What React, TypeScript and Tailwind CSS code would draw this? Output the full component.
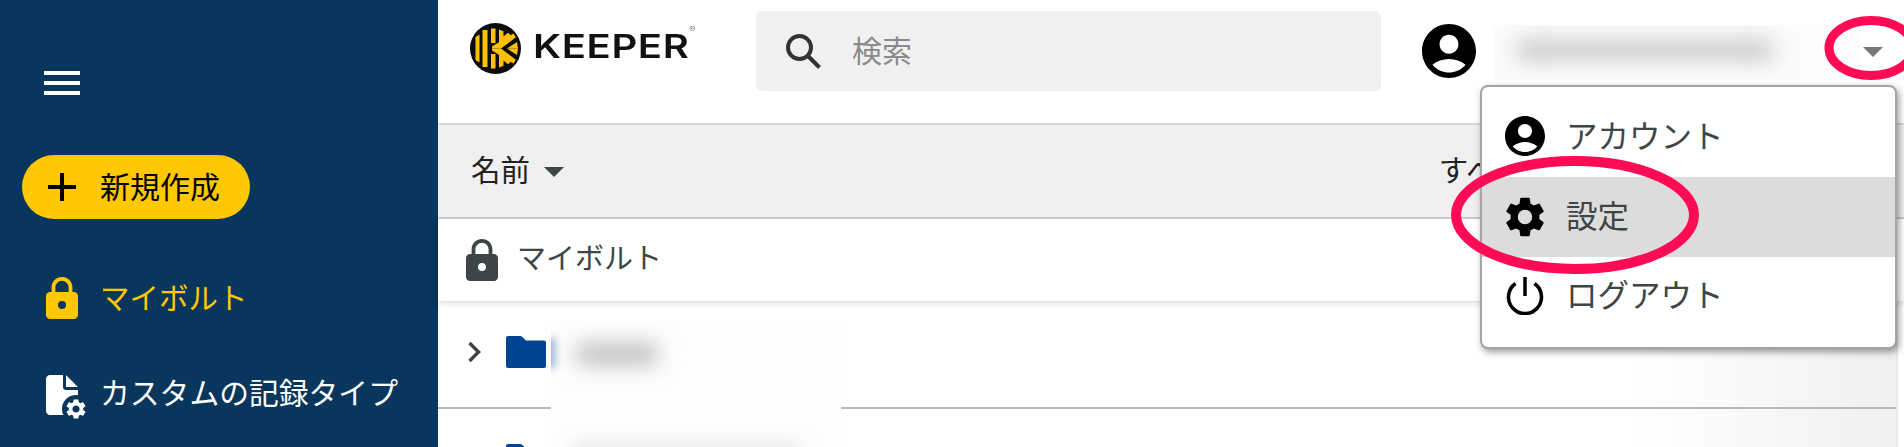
const ACCOUNT =
  "M12 2C6.48 2 2 6.48 2 12s4.48 10 10 10 10-4.48 10-10S17.52 2 12 2zm0 4c1.93 0 3.5 1.57 3.5 3.5S13.93 13 12 13s-3.5-1.57-3.5-3.5S10.07 6 12 6zm0 14c-2.03 0-4.43-.82-6.14-2.88C7.55 15.8 9.68 15 12 15s4.45.8 6.14 2.12C16.43 19.18 14.03 20 12 20z";
const GEAR =
  "M19.14 12.94c.04-.3.06-.61.06-.94 0-.32-.02-.64-.07-.94l2.03-1.58c.18-.14.23-.41.12-.61l-1.92-3.32c-.12-.22-.37-.29-.59-.22l-2.39.96c-.5-.38-1.03-.7-1.62-.94l-.36-2.54c-.04-.24-.24-.41-.48-.41h-3.84c-.24 0-.43.17-.47.41l-.36 2.54c-.59.24-1.13.57-1.62.94l-2.39-.96c-.22-.08-.47 0-.59.22L2.74 8.87c-.12.21-.08.47.12.61l2.03 1.58c-.05.3-.09.63-.09.94s.02.64.07.94l-2.03 1.58c-.18.14-.23.41-.12.61l1.92 3.32c.12.22.37.29.59.22l2.39-.96c.5.38 1.03.7 1.62.94l.36 2.54c.05.24.24.41.48.41h3.84c.24 0 .44-.17.47-.41l.36-2.54c.59-.24 1.13-.56 1.62-.94l2.39.96c.22.08.47 0 .59-.22l1.92-3.32c.12-.22.07-.47-.12-.61l-2.01-1.58zM12 15.6c-1.98 0-3.6-1.62-3.6-3.6s1.62-3.6 3.6-3.6 3.6 1.62 3.6 3.6-1.62 3.6-3.6 3.6z";
const FONT = "font-['Roboto','Noto_Sans_CJK_JP',sans-serif]";

function Lock({ className, hole }: { className: string; hole: string }) {
  return (
    <svg viewBox="0 0 32 42" className={className}>
      <path
        fill="currentColor"
        d="M16 0c5.800 0 10.400 4.600 10.400 10.400V15H28c2.200 0 4 1.800 4 4v19c0 2.200-1.800 4-4 4H4c-2.200 0-4-1.800-4-4V19c0-2.200 1.800-4 4-4h1.600v-4.600C5.600 4.600 10.200 0 16 0zm0 3.800c-3.600 0-6.600 3-6.600 6.600V15h13.200v-4.600c0-3.600-3-6.600-6.600-6.600z"
      />
      <circle cx="16" cy="28" r="4" fill={hole} />
    </svg>
  );
}

function CustomTypeIcon() {
  return (
    <svg viewBox="0 0 40 44" className="h-[44px] w-[40px] overflow-visible">
      <path
        fill="#fff"
        d="M4 0h13v12c0 1.700 1.300 3 3 3h12v21c0 2.200-1.800 4-4 4H4c-2.200 0-4-1.800-4-4V4c0-2.200 1.800-4 4-4zm16 0 12 12H20z"
      />
      <circle cx="30" cy="34" r="14" fill="#08365c" />
      <path fill="#fff" transform="translate(18 22)" d={GEAR} />
    </svg>
  );
}

function Sidebar() {
  return (
    <aside className="flex h-full w-[438px] shrink-0 flex-col bg-[#08365c]">
      <div className="mt-[71px] ml-[44px] flex w-[36px] flex-col gap-[6px]">
        <span className="h-[4px] bg-white" />
        <span className="h-[4px] bg-white" />
        <span className="h-[4px] bg-white" />
      </div>
      <button className="mt-[60px] ml-[22px] flex h-[64px] w-[228px] items-center gap-[24px] rounded-full bg-[#ffc800] pl-[26px] text-[30px] text-black">
        <svg viewBox="0 0 28 28" className="h-[28px] w-[28px]">
          <path d="M12 0h4v12h12v4H16v12h-4V16H0v-4h12z" />
        </svg>
        新規作成
      </button>
      <div className="mt-[58px] ml-[46px] flex h-[42px] items-center gap-[22px] text-[#ffc800]">
        <Lock className="h-[42px] w-[32px]" hole="#08365c" />
        <span className="mt-[2px] text-[29.500px]">マイボルト</span>
      </div>
      <div className="mt-[56px] ml-[46px] flex h-[44px] items-center gap-[14px] text-white">
        <CustomTypeIcon />
        <span className="mb-[6px] text-[29.800px]">カスタムの記録タイプ</span>
      </div>
    </aside>
  );
}

function KeeperLogo() {
  const half = (
    <>
      <path d="M21 5.500h4.500V20H21z" />
      <path d="M29 6.500l4.500 1.700v5.300l4.500-3.800 3 2.800-12 10z" />
      <path d="M22 23.500l21.500-13 2.300 3.700L31 25.500H22z" />
      <path d="M37 25.500l10-6.500 1 6.500z" />
    </>
  );
  return (
    <div className="flex items-center gap-[12px]">
      <svg viewBox="0 0 51 51" className="h-[51px] w-[51px] shrink-0">
        <circle cx="25.500" cy="25.500" r="25.500" fill="#0b0b0b" />
        <g fill="#ffc107">
          <path d="M5.500 14l4-2.500v28l-4-2.500zM12.500 7h5v37h-5z" />
          {half}
          <g transform="matrix(1 0 0 -1 0 51)">{half}</g>
        </g>
      </svg>
      <span className="relative mb-[3px] origin-left scale-x-[1.25] font-['Inter',sans-serif] text-[32px] leading-none font-semibold tracking-[0.5px] text-[#111]">
        KEEPER
        <span className="absolute top-[-6px] right-[-5px] text-[8px] font-normal tracking-normal text-[#777]">®</span>
      </span>
    </div>
  );
}

function Header() {
  return (
    <header className="flex h-[125px] shrink-0 border-b-2 border-[#d8d8d8]">
      <div className="mt-[23px] ml-[32px] w-[286px]">
        <KeeperLogo />
      </div>
      <div className="mt-[11px] flex h-[80px] w-[625px] items-center rounded-[6px] bg-[#f0f0f0] pl-[30px] text-[30px] text-[#8a8a8a]">
        <svg viewBox="0 0 35 35" className="h-[35px] w-[35px]" fill="none" stroke="#333" strokeWidth="4">
          <circle cx="13.500" cy="13.500" r="11.500" />
          <path d="M22 22l11.500 11.500" />
        </svg>
        <span className="ml-[31px]">検索</span>
      </div>
      <svg viewBox="2 2 20 20" className="mt-[24px] ml-[41px] h-[54px] w-[54px]">
        <path d={ACCOUNT} />
      </svg>
      <div className="relative mt-[25px] ml-[17px] h-[55px] w-[367px] overflow-hidden bg-[#fbfbfb]">
        <div className="absolute top-[13px] left-[22px] h-[24px] w-[260px] rounded-full bg-[#d0d0d0] blur-[10px]" />
      </div>
      <div className="mt-[47px] ml-[3px] h-0 w-0 border-x-[10px] border-t-[10px] border-x-transparent border-t-[#777]" />
    </header>
  );
}

function AccountMenu() {
  return (
    <div className="absolute top-[85px] left-[1042px] z-10 flex h-[264px] w-[417px] flex-col rounded-[8px] border-2 border-[#a4a4a4] bg-white py-[8px] text-[31.500px] text-[#3d4547] shadow-[2px_3px_7px_rgba(0,0,0,0.4)]">
      <div className="flex h-[82px] items-center gap-[21px] pl-[23px]">
        <svg viewBox="2 2 20 20" className="h-[40px] w-[40px] shrink-0">
          <path d={ACCOUNT} />
        </svg>
        <span className="mt-[3px]">アカウント</span>
      </div>
      <div className="flex h-[80px] items-center gap-[21px] bg-[#dcdcdc] pb-[2px] pl-[23px]">
        <svg viewBox="2 2 20 20" className="mt-[2px] h-[40px] w-[40px] shrink-0">
          <path d={GEAR} />
        </svg>
        <span className="mt-[3px]">設定</span>
      </div>
      <div className="flex h-[80px] items-center gap-[21px] pb-[4px] pl-[23px]">
        <svg viewBox="0 0 40 40" className="h-[40px] w-[40px] shrink-0" fill="none" stroke="#000" strokeWidth="3.500">
          <path d="M20 2v19" />
          <path d="M10.500 8.500a16.500 16.500 0 1 0 19 0" />
        </svg>
        <span className="mt-[3px]">ログアウト</span>
      </div>
    </div>
  );
}

function FolderIcon() {
  return (
    <svg viewBox="0 0 40 32" className="h-[32px] w-[40px] shrink-0">
      <path fill="#004492" d="M2 0h12c1 0 1.600.4 2.300 1L20 4.500h18c1.100 0 2 .9 2 2V30c0 1.100-.9 2-2 2H2c-1.100 0-2-.9-2-2V2C0 .9.900 0 2 0z" />
    </svg>
  );
}

function FileList() {
  return (
    <div className="flex min-h-0 flex-1 flex-col">
      <div className="flex h-[94px] shrink-0 items-center justify-between border-b-2 border-[#cfcfcf] bg-[#f0f0f0] text-[#222]">
        <div className="flex items-center gap-[14px] pl-[33px] text-[29.500px]">
          名前
          <span className="mt-[2px] h-0 w-0 border-x-[10px] border-t-[10px] border-x-transparent border-t-[#3d4547]" />
        </div>
        <span className="mr-[380px] text-[29.500px]">すべて</span>
      </div>
      <div className="relative z-[1] flex h-[82px] shrink-0 items-center gap-[19px] bg-white pl-[28px] text-[#3d4547] shadow-[0_2px_6px_rgba(0,0,0,0.15)]">
        <Lock className="h-[42px] w-[32px]" hole="#fff" />
        <span className="text-[29px]">マイボルト</span>
      </div>
      <div className="mr-[6px] flex-1 border-r-2 border-[#e8e8e8] bg-linear-to-r from-white from-[82%] to-[#f0f0f0]">
        <div className="flex h-[108px] items-center border-b-2 border-[#b4b9b9] pb-[4px] pl-[29px]">
          <svg viewBox="0 0 14 22" className="h-[22px] w-[14px]" fill="none" stroke="#3d4547" strokeWidth="3.500">
            <path d="M2.500 2l9 9-9 9" />
          </svg>
          <span className="ml-[25px]">
            <FolderIcon />
          </span>
        </div>
        <div className="mt-[35px] ml-[68px]">
          <FolderIcon />
        </div>
      </div>
    </div>
  );
}

function Annotations() {
  return (
    <svg className="pointer-events-none absolute top-0 left-0 z-20 h-[447px] w-[1904px]" viewBox="0 0 1904 447" fill="none" stroke="#ff0a54">
      <ellipse cx="1871" cy="48" rx="42" ry="27.500" strokeWidth="9" />
      <ellipse cx="1575" cy="215" rx="119" ry="54" strokeWidth="10" />
    </svg>
  );
}

export default function App() {
  return (
    <div className={`relative flex h-[447px] w-[1904px] overflow-hidden bg-white ${FONT}`}>
      <Sidebar />
      <main className="relative flex min-w-0 flex-1 flex-col">
        <Header />
        <FileList />
        <AccountMenu />
        {/* blurred-out folder names */}
        <div className="absolute top-[320px] left-[113px] z-[2] h-[127px] w-[290px] overflow-hidden bg-[#fdfdfd]">
          <div className="absolute top-[18px] left-[-8px] h-[30px] w-[12px] bg-[#004492]/40 blur-[4px]" />
          <div className="absolute top-[22px] left-[24px] h-[24px] w-[84px] rounded-full bg-[#c4c4c4] blur-[10px]" />
          <div className="absolute top-[124px] left-[20px] h-[14px] w-[230px] rounded-full bg-[#e4e4e4] blur-[8px]" />
        </div>
      </main>
      <Annotations />
    </div>
  );
}
